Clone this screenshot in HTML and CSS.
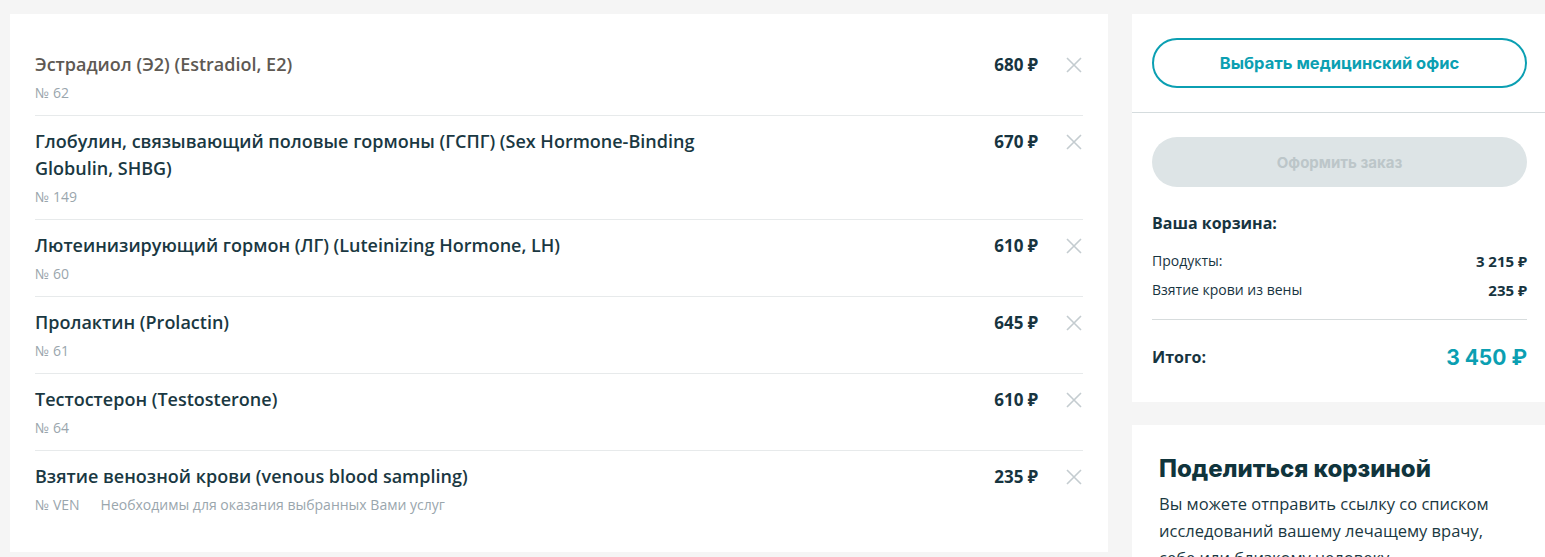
FILE: index.html
```html
<!DOCTYPE html>
<html lang="ru">
<head>
<meta charset="utf-8">
<title>Корзина</title>
<link rel="stylesheet" href="styles.css">
</head>
<body>
<div class="page">
  <div class="cart">
    <div class="item">
      <div class="info">
        <div class="title title-muted">Эстрадиол (Э2) (Estradiol, E2)</div>
        <div class="meta"><span>№ 62</span></div>
      </div>
      <div class="price">680 ₽</div>
      <button class="remove" aria-label="Удалить"><svg viewBox="0 0 16 16" width="16" height="16"><path d="M1 1L15 15M15 1L1 15"/></svg></button>
    </div>
    <div class="item">
      <div class="info">
        <div class="title">Глобулин, связывающий половые гормоны (ГСПГ) (Sex Hormone-Binding Globulin, SHBG)</div>
        <div class="meta"><span>№ 149</span></div>
      </div>
      <div class="price">670 ₽</div>
      <button class="remove" aria-label="Удалить"><svg viewBox="0 0 16 16" width="16" height="16"><path d="M1 1L15 15M15 1L1 15"/></svg></button>
    </div>
    <div class="item">
      <div class="info">
        <div class="title">Лютеинизирующий гормон (ЛГ) (Luteinizing Hormone, LH)</div>
        <div class="meta"><span>№ 60</span></div>
      </div>
      <div class="price">610 ₽</div>
      <button class="remove" aria-label="Удалить"><svg viewBox="0 0 16 16" width="16" height="16"><path d="M1 1L15 15M15 1L1 15"/></svg></button>
    </div>
    <div class="item">
      <div class="info">
        <div class="title">Пролактин (Prolactin)</div>
        <div class="meta"><span>№ 61</span></div>
      </div>
      <div class="price">645 ₽</div>
      <button class="remove" aria-label="Удалить"><svg viewBox="0 0 16 16" width="16" height="16"><path d="M1 1L15 15M15 1L1 15"/></svg></button>
    </div>
    <div class="item">
      <div class="info">
        <div class="title">Тестостерон (Testosterone)</div>
        <div class="meta"><span>№ 64</span></div>
      </div>
      <div class="price">610 ₽</div>
      <button class="remove" aria-label="Удалить"><svg viewBox="0 0 16 16" width="16" height="16"><path d="M1 1L15 15M15 1L1 15"/></svg></button>
    </div>
    <div class="item">
      <div class="info">
        <div class="title">Взятие венозной крови (venous blood sampling)</div>
        <div class="meta"><span>№ VEN</span><span>Необходимы для оказания выбранных Вами услуг</span></div>
      </div>
      <div class="price">235 ₽</div>
      <button class="remove" aria-label="Удалить"><svg viewBox="0 0 16 16" width="16" height="16"><path d="M1 1L15 15M15 1L1 15"/></svg></button>
    </div>
  </div>

  <div class="side">
    <div class="summary">
      <div class="summary-top">
        <button class="btn btn-outline">Выбрать медицинский офис</button>
      </div>
      <div class="summary-body">
        <button class="btn btn-disabled" disabled>Оформить заказ</button>
        <div class="basket-title">Ваша корзина:</div>
        <div class="line"><span>Продукты:</span><b>3 215 ₽</b></div>
        <div class="line"><span>Взятие крови из вены</span><b>235 ₽</b></div>
        <div class="total"><span>Итого:</span><b>3 450 ₽</b></div>
      </div>
    </div>
    <div class="share">
      <h2>Поделиться корзиной</h2>
      <p>Вы можете отправить ссылку со списком исследований вашему лечащему врачу, себе или близкому человеку</p>
    </div>
  </div>
</div>
</body>
</html>
```

FILE: styles.css
```css
html, body {
  margin: 0;
  padding: 0;
  background: #f5f5f5;
  overflow: hidden;
}
body {
  font-family: "Open Sans", "Noto Sans", sans-serif;
  color: #17343f;
}
.page {
  display: flex;
  align-items: flex-start;
  gap: 24px;
  padding: 14px 0 0 10px;
  width: 1560px;
}
.cart {
  width: 1048px;
  flex: none;
  background: #fff;
  padding: 25px 25px 25px;
}
.item {
  display: flex;
  align-items: flex-start;
  padding: 12px 0 12px;
  border-top: 1px solid #e7eaeb;
}
.item:first-child {
  border-top: none;
}
.info {
  flex: 1;
}
.title {
  font-size: 18px;
  font-weight: 600;
  line-height: 27px;
  color: #1a3842;
  max-width: 680px;
}
.title-muted {
  color: #5e5953;
}
.meta {
  margin-top: 5px;
  font-size: 14px;
  line-height: 20px;
  color: #9aa6ad;
  display: flex;
  gap: 21px;
}
.price {
  font-size: 17px;
  font-weight: 700;
  line-height: 27px;
  color: #17343f;
  white-space: nowrap;
}
.remove {
  border: none;
  background: none;
  padding: 0;
  margin: 5px 0 0 28px;
  width: 17px;
  height: 17px;
  cursor: pointer;
}
.remove svg {
  display: block;
  fill: none;
  stroke: #c4ccd0;
  stroke-width: 1.6;
}
.side {
  width: 415px;
  flex: none;
  display: flex;
  flex-direction: column;
  gap: 23px;
}
.summary {
  background: #fff;
}
.summary-top {
  padding: 24px 20px 24px;
  border-bottom: 1px solid #d5dcde;
}
.btn {
  display: block;
  width: 100%;
  height: 50px;
  border-radius: 25px;
  font-family: "Inter", "Lato", sans-serif;
  font-weight: 700;
  font-size: 15px;
  box-sizing: border-box;
}
.btn-outline {
  background: #fff;
  border: 2px solid #0b9fb2;
  color: #0b9fb2;
  font-size: 16.5px;
}
.btn-disabled {
  background: #dde4e6;
  border: none;
  color: #bcc6c9;
}
.summary-body {
  padding: 24px 20px 30px;
}
.basket-title {
  margin-top: 24px;
  font-size: 16px;
  font-weight: 700;
  line-height: 24px;
}
.line {
  display: flex;
  justify-content: space-between;
  align-items: center;
  font-size: 14px;
  line-height: 22px;
  margin-top: 15px;
}
.line + .line {
  margin-top: 7px;
}
.line b {
  font-size: 15px;
  font-weight: 700;
}
.total {
  margin-top: 18px;
  border-top: 1px solid #d7dcdd;
  padding-top: 22px;
  height: 30px;
  display: flex;
  justify-content: space-between;
  align-items: center;
  font-size: 16px;
  font-weight: 700;
}
.total b {
  font-family: "Inter", "Lato", sans-serif;
  font-size: 21px;
  color: #0b9fb2;
  font-weight: 700;
}
.share {
  background: #fff;
  padding: 29px 26px 20px 27px;
}
.share h2 {
  margin: 0;
  font-family: "Inter", "Lato", sans-serif;
  font-size: 24px;
  font-weight: 800;
  line-height: 30px;
  color: #10343c;
}
.share p {
  margin: 6px 0 0;
  font-size: 16.5px;
  line-height: 27px;
  color: #1a3842;
}
```
